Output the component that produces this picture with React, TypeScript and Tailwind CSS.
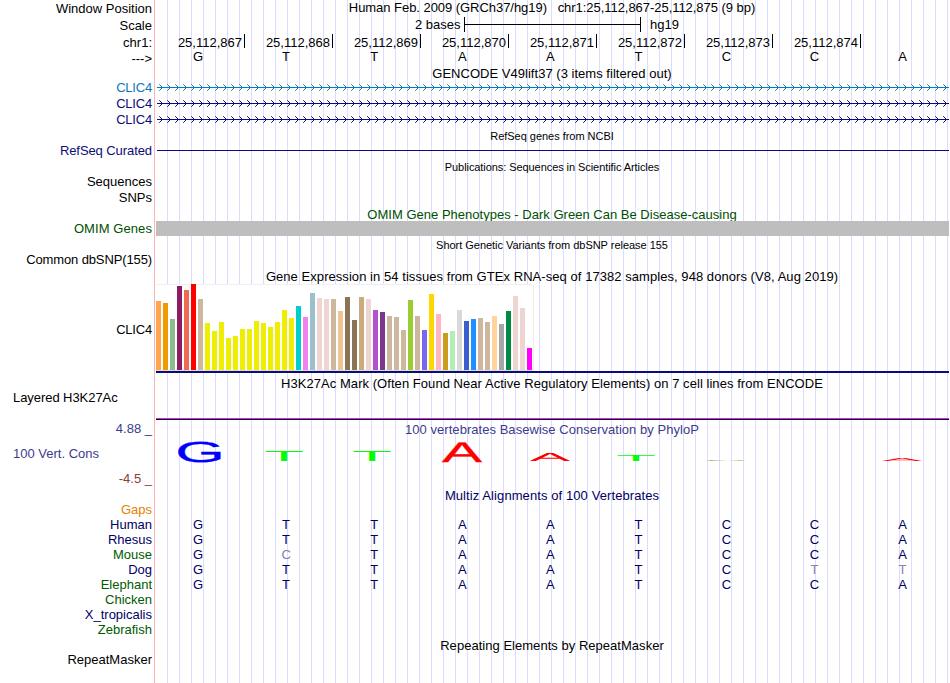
import React from "react";

const labels: [string, string][] = [
  ["Window Position", "h-[17px]"],
  ["Scale", "h-[17px]"],
  ["chr1:", "h-[16px]"],
  ["--->", "h-[29px]"],
  ["CLIC4", "h-[16px] text-[#0c78b8] tracking-[-0.2px]"],
  ["CLIC4", "h-[16px] text-[#0c0c78] tracking-[-0.2px]"],
  ["CLIC4", "h-[31px] text-[#0c0c78] tracking-[-0.2px]"],
  ["RefSeq Curated", "h-[31px] text-[#0c0c78] tracking-[-0.08px]"],
  ["Sequences", "h-[16px]"],
  ["SNPs", "h-[31px]"],
  ["OMIM Genes", "h-[31px] text-[#005000] tracking-[0.08px]"],
  ["Common dbSNP(155)", "h-[70px] tracking-[-0.12px]"],
  ["CLIC4", "h-[68px] tracking-[-0.2px]"],
  ["Layered H3K27Ac", "h-[31px] pl-[13px] !justify-start tracking-[-0.06px]"],
  ["4.88 _", "h-[25px] text-[#3c3c8c]"],
  ["100 Vert. Cons", "h-[25px] text-[#3c3c8c] pl-[13px] !justify-start"],
  ["-4.5 _", "h-[31px] text-[#8c3c3c]"],
  ["Gaps", "h-[15px] text-[#e68200]"],
  ["Human", "h-[15px] text-[#000064]"],
  ["Rhesus", "h-[15px] text-[#000064]"],
  ["Mouse", "h-[15px] text-[#005a00]"],
  ["Dog", "h-[15px] text-[#000064]"],
  ["Elephant", "h-[15px] text-[#005a00]"],
  ["Chicken", "h-[15px] text-[#005a00]"],
  ["X_tropicalis", "h-[15px] text-[#000064]"],
  ["Zebrafish", "h-[30px] text-[#005a00]"],
  ["RepeatMasker", "h-[19px]"],
];

const T = "#cdb79e";
const Y = "#eeee00";
const P = "#eed5d2";
const bars: [number, string][] = [
  [69, "#ffa54f"], [67, "#ee9a00"], [51, "#8fbc8f"], [84, "#8b1c62"], [80, "#ee6a50"], [86, "#ff0000"], [71, T],
  [47, Y], [39, Y], [48, Y], [32, Y], [34, Y], [41, Y], [41, Y], [49, Y], [47, Y], [43, Y], [48, Y], [60, Y], [52, Y],
  [64, "#00cdcd"], [53, "#ee82ee"], [77, "#9ac0cd"], [72, P], [71, P], [71, T], [59, "#eec591"], [73, "#8b7355"],
  [50, "#8b7355"], [73, "#cdaa7d"], [71, P], [60, "#b452cd"], [58, "#7a378b"], [54, T], [53, T], [40, T],
  [70, "#9acd32"], [54, T], [40, "#7a67ee"], [76, "#ffd700"], [56, "#ffb6c1"], [37, "#cd9b1d"], [39, "#b4eeb4"],
  [60, "#d9d9d9"], [49, "#3a5fcd"], [51, "#1e90ff"], [52, T], [48, T], [54, "#ffd39b"], [46, "#a6a6a6"],
  [59, "#008b45"], [74, P], [62, P], [22, "#ff00ff"],
];

const positions = ["25,112,867", "25,112,868", "25,112,869", "25,112,870", "25,112,871", "25,112,872", "25,112,873", "25,112,874"];

function Title({ children, className }: { children: React.ReactNode; className: string }) {
  return <div className={`flex shrink-0 justify-center whitespace-pre ${className}`}>{children}</div>;
}

function Bases({ seq, className, faded = [] }: { seq: string; className: string; faded?: number[] }) {
  return (
    <div className={`-ml-px grid w-[792.6px] shrink-0 grid-cols-9 text-center ${className}`}>
      {seq.split("").map((b, i) => (
        <span key={i} className={faded.includes(i) ? "text-[#8282af]" : ""}>{b}</span>
      ))}
    </div>
  );
}

function Gene({ color, id }: { color: string; id: string }) {
  return (
    <svg className="ml-[2px] block h-4 w-[792px] shrink-0" shapeRendering="crispEdges">
      <defs>
        <pattern id={id} width="8" height="16" patternUnits="userSpaceOnUse">
          <path d="M3 5h1v1h-1zM4 6h1v1h-1zM4 8h1v1h-1zM3 9h1v1h-1z" fill={color} />
          <path d="M2 4h1v1h-1zM2 10h1v1h-1z" fill={color} fillOpacity=".7" />
        </pattern>
      </defs>
      <rect width="792" height="16" fill={`url(#${id})`} />
      <rect y="7" width="792" height="1" fill={color} />
    </svg>
  );
}

// Each entry: letter, left edge, rendered width, cap height, colour
const logo: [string, number, number, number, string][] = [
  ["G", 178.4, 42.6, 20, "#0000ff"],
  ["T", 265.3, 37.4, 10, "#00ff00"],
  ["T", 353.3, 37.4, 10, "#00ff00"],
  ["A", 442, 39.8, 19.6, "#ff0000"],
  ["A", 529.8, 40.4, 8, "#ff0000"],
  ["T", 617.5, 37.4, 6, "#00ff00"],
  ["C", 706.5, 40, 1, "#8c8c00"],
  ["A", 882, 40, 3, "#ff0000"],
];
const metrics: Record<string, [number, number]> = { G: [0.05, 0.668], T: [0.021, 0.569], A: [0.002, 0.663], C: [0.05, 0.636] };

function Logo() {
  return (
    <svg className="block h-[51px] w-[794px] shrink-0" viewBox="155 437 794 51" textRendering="geometricPrecision">
      {logo.map(([ch, x, w, h, c], i) => {
        const [l, bw] = metrics[ch];
        const sx = w / (bw * 20);
        const sy = h / 13.76;
        return (
          <text
            key={i}
            fontSize="20"
            fill={c}
            stroke={c}
            strokeWidth={h > 15 ? 0.2 : 0}
            transform={`translate(${x - l * 20 * sx} ${h > 15 ? 461.7 : 461}) scale(${sx} ${sy})`}
          >
            {ch}
          </text>
        );
      })}
    </svg>
  );
}

export default function App() {
  return (
    <div className="flex h-[683px] w-[950px] overflow-hidden bg-white font-['Liberation_Sans',Arial,sans-serif] text-[13px] leading-[15px] text-black">
      <div className="flex w-[155px] shrink-0 flex-col border-r border-[#ffb4b4] pt-px pr-[2px]">
        {labels.map(([t, c], i) => (
          <div key={i} className={`flex shrink-0 justify-end whitespace-pre ${c}`}>{t}</div>
        ))}
      </div>
      <div className="flex w-[794px] shrink-0 flex-col bg-[repeating-linear-gradient(90deg,#dcdcff_0_1px,transparent_1px_12px)] bg-[position:12px_0] bg-no-repeat">
        <Title className="h-[17px] tracking-[-0.045px]">{"Human Feb. 2009 (GRCh37/hg19)   chr1:25,112,867-25,112,875 (9 bp)"}</Title>
        <div className="flex h-[17px] shrink-0 pl-[260px]">
          <span className="w-[49px]">2 bases</span>
          <div className="flex h-[15px] w-[177px] items-center border-x border-black"><div className="h-px w-full bg-black" /></div>
          <span className="ml-[9px]">hg19</span>
        </div>
        <div className="flex h-[15px] shrink-0 pl-[2px]">
          {positions.map((p) => (
            <div key={p} className="h-[14px] w-[88px] shrink-0 border-r border-black pt-px pr-[2px] text-right">{p}</div>
          ))}
        </div>
        <Bases seq="GTTAATCCA" className="h-[17px]" />
        <Title className="h-[14px] tracking-[0.025px]">GENCODE V49lift37 (3 items filtered out)</Title>
        <Gene color="#0c78b8" id="g1" />
        <Gene color="#0c0c78" id="g2" />
        <Gene color="#0c0c78" id="g3" />
        <Title className="h-4 pt-[1px] text-[11px] tracking-[-0.03px]">RefSeq genes from NCBI</Title>
        <div className="h-4 shrink-0 pt-[6px] pl-[2px]"><div className="h-px bg-[#0c0c78]" /></div>
        <Title className="h-[47px] text-[11px] tracking-[-0.07px]">Publications: Sequences in Scientific Articles</Title>
        <Title className="h-[14px] text-[#005000] tracking-[0.015px]">OMIM Gene Phenotypes - Dark Green Can Be Disease-causing</Title>
        <div className="z-10 ml-px h-[15px] shrink-0 bg-[#bebebe]" />
        <Title className="h-[33px] pt-[2px] text-[11px] tracking-[-0.03px]">Short Genetic Variants from dbSNP release 155</Title>
        <Title className="h-[15px] tracking-[0.055px]">Gene Expression in 54 tissues from GTEx RNA-seq of 17382 samples, 948 donors (V8, Aug 2019)</Title>
        <div className="ml-px flex h-[87px] w-[378px] shrink-0 items-end gap-[2px] border border-l-0 border-[#f0f0f0] border-b-[#dcdcdc] bg-white">
          {bars.map(([h, c], i) => (
            <div key={i} className="w-[5px] shrink-0" style={{ height: h, background: c }} />
          ))}
        </div>
        <div className="ml-px h-[2px] shrink-0 bg-[#0c0c78]" />
        <div className="h-[3px] shrink-0" />
        <Title className="h-[42px] tracking-[0.05px]">H3K27Ac Mark (Often Found Near Active Regulatory Elements) on 7 cell lines from ENCODE</Title>
        <div className="ml-px h-[2px] shrink-0 border-b border-[#14003c] bg-[#c832c8]" />
        <Title className="h-[17px] pt-[2px] text-[#3c3c8c] tracking-[0.04px]">100 vertebrates Basewise Conservation by PhyloP</Title>
        <Logo />
        <Title className="h-[29px] text-[#000064] tracking-[0.09px]">Multiz Alignments of 100 Vertebrates</Title>
        <Bases seq="GTTAATCCA" className="h-[15px] text-[#000064]" />
        <Bases seq="GTTAATCCA" className="h-[15px] text-[#000064]" />
        <Bases seq="GCTAATCCA" className="h-[15px] text-[#000064]" faded={[1]} />
        <Bases seq="GTTAATCTT" className="h-[15px] text-[#000064]" faded={[7, 8]} />
        <Bases seq="GTTAATCCA" className="h-[15px] text-[#000064]" />
        <Title className="mt-[46px] h-[45px] tracking-[0.03px]">Repeating Elements by RepeatMasker</Title>
      </div>
    </div>
  );
}
